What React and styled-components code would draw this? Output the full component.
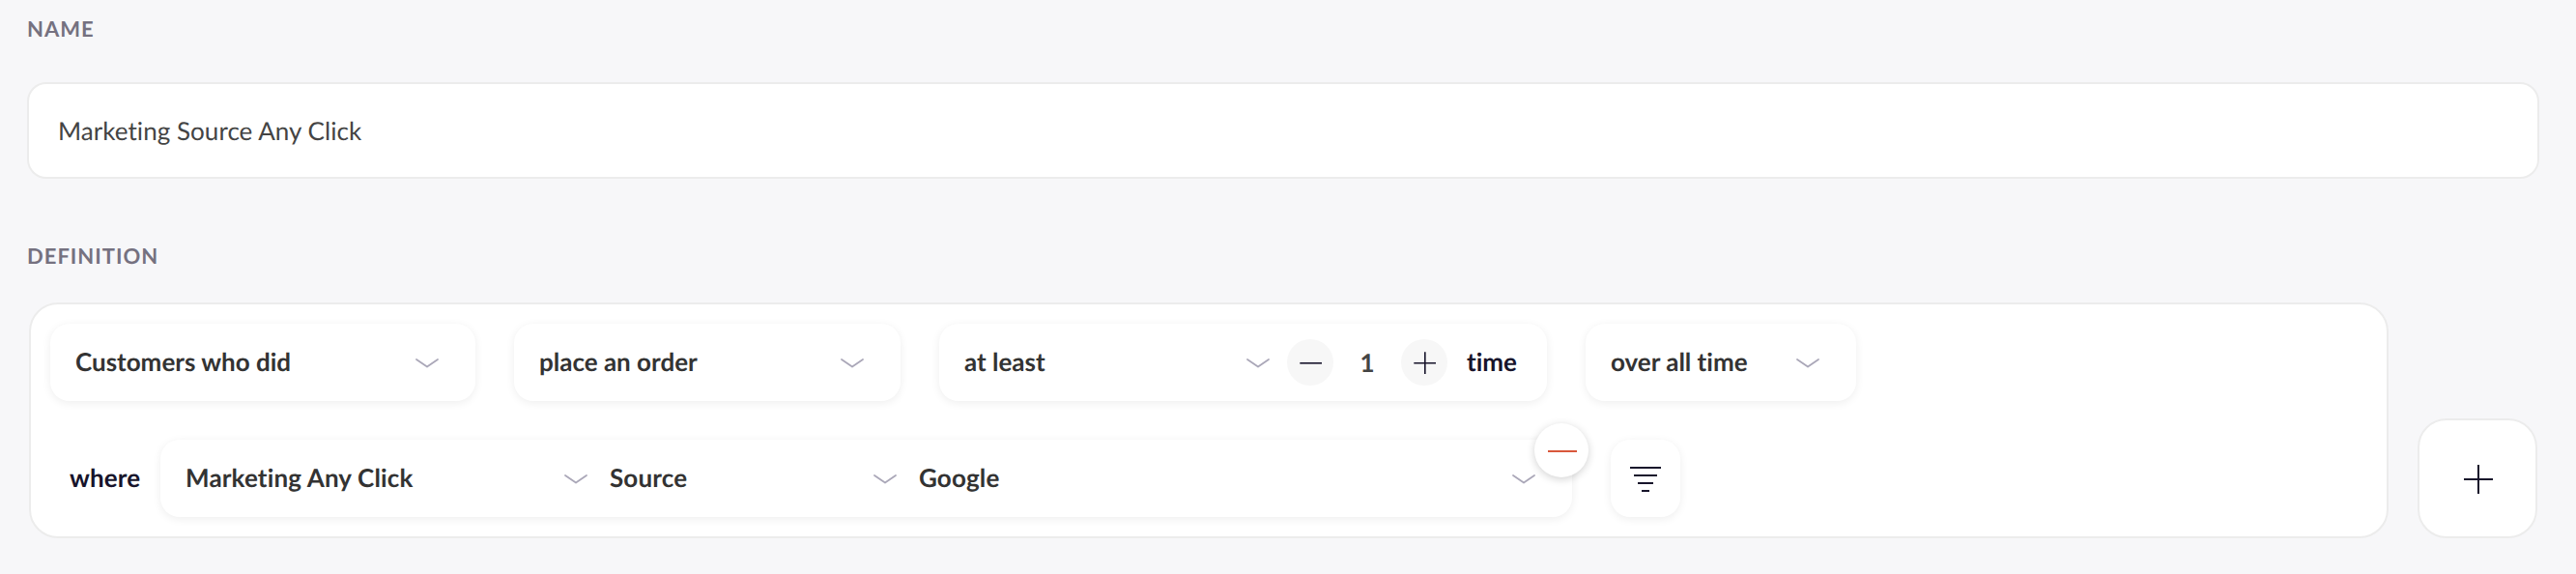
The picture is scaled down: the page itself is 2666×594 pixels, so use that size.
import React, { useState } from 'react'
import styled, { createGlobalStyle } from 'styled-components'

const GlobalStyle = createGlobalStyle`
* {
  box-sizing: border-box;
}
body {
  margin: 0;
  background-color: #f7f7f9;
  font-family: "Lato", "Liberation Sans", sans-serif;
  font-variant-ligatures: none;
  text-rendering: geometricPrecision;
}
button, input {
  font-family: inherit;
  font-variant-ligatures: inherit;
  text-rendering: inherit;
  border: none;
  outline: none;
  margin: 0;
  padding: 0;
}
svg {
  display: block;
}
`;
const Page = styled.div`
height: 594px;
padding: 17px 38px 0 28px;
`;
const Label = styled.div`
height: 26px;
line-height: 26px;
font-size: 22px;
font-weight: 700;
letter-spacing: 1px;
color: #757180;
text-transform: uppercase;
`;
const NameInput = styled.input`
display: block;
width: 100%;
height: 100px;
margin: 42px 0 67px;
&& { padding: 0 30px; border: 2px solid #ececec; }
border-radius: 20px;
background-color: #fff;
font-size: 26px;
letter-spacing: 0.05px;
color: #444;
`;
const DefinitionRow = styled.div`
display: flex;
align-items: flex-end;
gap: 30px;
margin-top: 35px;
padding: 0 2px;
`;
const Panel = styled.div`
display: flex;
flex: 1;
flex-direction: column;
gap: 40px;
padding: 20px;
border: 2px solid #ececec;
border-radius: 30px;
background-color: #fff;
`;
const Line = styled.div`
display: flex;
align-items: center;
gap: 40px;
height: 80px;
`;
const Pill = styled.div`
position: relative;
display: flex;
align-items: center;
width: ${p => p.$width}px;
height: 80px;
padding: 0 ${p => p.$right || 38}px 0 26px;
border-radius: 20px;
background-color: #fff;
box-shadow: 0 2px 10px rgba(0, 0, 0, 0.07);
`;
const SelectBox = styled.div`
display: flex;
align-items: center;
justify-content: space-between;
flex: ${p => p.$width ? `0 0 ${p.$width}px` : '1'};
margin-right: ${p => p.$gap || 0}px;
font-size: 26px;
font-weight: 700;
line-height: 32px;
color: #333;
`;
const Value = styled.span`
padding-bottom: 2px;
`;
const Word = styled.span`
padding-bottom: 2px;
font-size: 26px;
font-weight: 700;
line-height: 32px;
color: #17142b;
`;
const Where = styled.div`
display: flex;
align-items: center;
gap: 20px;
padding-left: 20px;
letter-spacing: 0.15px;
`;
const Prefix = styled(Word)`
width: 74px;
`;
const RoundButton = styled.button`
display: flex;
align-items: center;
justify-content: center;
width: 48px;
height: 48px;
border-radius: 50%;
background-color: #f7f7f7;
`;
const Count = styled.span`
width: 70px;
text-align: center;
font-size: 26px;
font-weight: 700;
line-height: 32px;
color: #444;
`;
const Unit = styled(Word)`
margin-left: 20px;
`;
const RemoveButton = styled(RoundButton)`
position: absolute;
top: -17px;
right: -17px;
width: 56px;
height: 56px;
background-color: #fff;
box-shadow: 0 2px 8px rgba(0, 0, 0, 0.18);
`;
const FilterButton = styled.button`
display: flex;
align-items: center;
justify-content: center;
width: 72px;
height: 80px;
border-radius: 20px;
background-color: #fff;
box-shadow: 0 2px 10px rgba(0, 0, 0, 0.07);
`;
const AddButton = styled.button`
display: flex;
align-items: center;
justify-content: center;
width: 124px;
height: 124px;
&& { border: 2px solid #ececec; }
border-radius: 30px;
background-color: #fff;
`;

const Chevron = () => (
  <svg width="24" height="12" viewBox="0 0 24 12" fill="none">
    <path d="M1 3L12 10.6L23 3" stroke="#aaa7b8" strokeWidth="1.8" strokeLinecap="round" strokeLinejoin="round" />
  </svg>
)
const Minus = ({ large, color = '#17142b' }) => {
  const size = large ? 32 : 26
  return (
    <svg width={size} height="4" viewBox={`0 0 ${size} 4`}>
      <path d={large ? 'M2 3H32' : 'M2.3 2.8H25'} stroke={color} strokeWidth={large ? 2 : 1.6} />
    </svg>
  )
}
const Plus = ({ large }) => {
  const size = large ? 32 : 26
  return (
    <svg width={size} height={size} viewBox={`0 0 ${size} ${size}`}>
      <path
        d={large ? 'M2 17H32M17 2V32' : 'M2.3 13.8H25M13.8 2.3V25'}
        stroke="#17142b"
        strokeWidth={large ? 2 : 1.6}
      />
    </svg>
  )
}
const FilterIcon = () => (
  <svg width="32" height="28" viewBox="0 0 32 28">
    <path d="M0 3H32M4 11H28M8 19H24M12 27H20" stroke="#17142b" strokeWidth="2" />
  </svg>
)
const Select = ({ value, width, gap }) => (
  <SelectBox $width={width} $gap={gap}>
    <Value>{value}</Value>
    <Chevron />
  </SelectBox>
)

const App = () => {
  const [name, setName] = useState('Marketing Source Any Click')
  const [count, setCount] = useState(1)
  return (
    <>
      <GlobalStyle />
      <Page>
        <Label>Name</Label>
        <NameInput value={name} onChange={e => setName(e.target.value)} />
        <Label>Definition</Label>
        <DefinitionRow>
          <Panel>
            <Line>
              <Pill $width={440}><Select value="Customers who did" /></Pill>
              <Pill $width={400}><Select value="place an order" /></Pill>
              <Pill $width={629} $right={30}>
                <Select value="at least" width={316} gap={18} />
                <RoundButton onClick={() => setCount(Math.max(1, count - 1))}><Minus /></RoundButton>
                <Count>{count}</Count>
                <RoundButton onClick={() => setCount(count + 1)}><Plus /></RoundButton>
                <Unit>{count === 1 ? 'time' : 'times'}</Unit>
              </Pill>
              <Pill $width={280}><Select value="over all time" /></Pill>
            </Line>
            <Line>
              <Where>
                <Prefix>where</Prefix>
                <Pill $width={1461}>
                  <Select value="Marketing Any Click" width={416} gap={23} />
                  <Select value="Source" width={297} gap={23} />
                  <Select value="Google" />
                  <RemoveButton><Minus large color="#d9583c" /></RemoveButton>
                </Pill>
              </Where>
              <FilterButton><FilterIcon /></FilterButton>
            </Line>
          </Panel>
          <AddButton><Plus large /></AddButton>
        </DefinitionRow>
      </Page>
    </>
  )
}

export default App
